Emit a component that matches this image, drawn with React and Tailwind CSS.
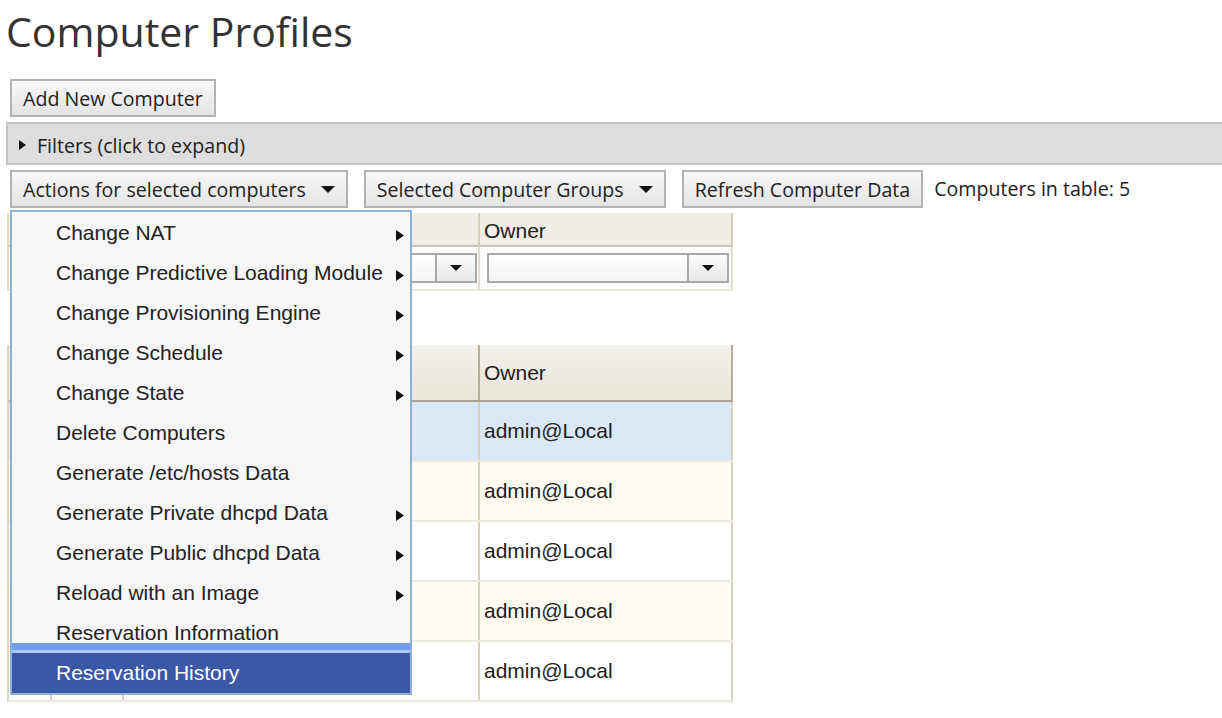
import React from "react";

const menuItems = [
  { label: "Change NAT", sub: true },
  { label: "Change Predictive Loading Module", sub: true },
  { label: "Change Provisioning Engine", sub: true },
  { label: "Change Schedule", sub: true },
  { label: "Change State", sub: true },
  { label: "Delete Computers" },
  { label: "Generate /etc/hosts Data" },
  { label: "Generate Private dhcpd Data", sub: true },
  { label: "Generate Public dhcpd Data", sub: true },
  { label: "Reload with an Image", sub: true },
  { label: "Reservation Information" },
  { label: "Reservation History", active: true },
];

const rowColors = ["bg-[#dbe7f6]", "bg-[#fdfbf2]", "bg-white", "bg-[#fdfbf2]", "bg-white"];

const DownArrow = ({ w = 14, h = 7 }) => (
  <svg width={w} height={h} viewBox={`0 0 ${w} ${h}`}>
    <path d={`M0 0H${w}L${w / 2} ${h}Z`} fill="#111" />
  </svg>
);

const RightArrow = ({ w = 8, h = 11 }) => (
  <svg width={w} height={h} viewBox={`0 0 ${w} ${h}`}>
    <path d={`M0 0L${w} ${h / 2}L0 ${h}Z`} fill="#111" />
  </svg>
);

function Button({ children, arrow }) {
  return (
    <button className="flex h-[38px] items-center gap-[15px] border-2 border-[#b3b3b3] bg-linear-to-b from-[#f8f8f8] to-[#e4e4e4] px-[11px] text-[19.6px] leading-[24px] text-[#222]">
      <span className="pt-[1px]">{children}</span>
      {arrow && <DownArrow />}
    </button>
  );
}

function Select({ className }) {
  return (
    <div className={`flex h-[30px] border-2 border-[#a9a9a9] bg-linear-to-b from-white to-[#f4f4f4] ${className}`}>
      <div className="flex-1" />
      <div className="flex w-[40px] items-center justify-center border-l-2 border-[#a9a9a9] bg-linear-to-b from-[#fbfbfb] to-[#e8e8e8]">
        <DownArrow w={12} h={6} />
      </div>
    </div>
  );
}

export default function App() {
  return (
    <div className="min-h-[718px] bg-white pl-[6px] font-['Open_Sans',sans-serif] text-[#222]">
      <h1 className="pt-[7px] text-[41px] leading-[48px] text-[#333]">Computer Profiles</h1>

      <div className="mt-[24px] ml-[4px] flex">
        <Button>Add New Computer</Button>
      </div>

      {/* filters bar */}
      <div className="mt-[5px] flex h-[43px] items-center gap-[11px] border-y-2 border-l-2 border-[#c4c4c4] bg-[#dedede] pl-[11px] text-[19.6px]">
        <span className="pt-[3px]">
          <RightArrow w={7} h={10} />
        </span>
        <span className="pt-[4px]">Filters (click to expand)</span>
      </div>

      {/* action buttons */}
      <div className="relative z-10 mt-[5px] ml-[4px] flex items-center gap-[16px]">
        <Button arrow>Actions for selected computers</Button>
        <Button arrow>Selected Computer Groups</Button>
        <Button>Refresh Computer Data</Button>
        <span className="-ml-[5px] text-[19.6px]">Computers in table: 5</span>

        <div className="absolute left-0 top-[40px] w-[402px] border-2 border-[#8fb1d9] bg-[#f6f6f6] pt-[1px] font-['Liberation_Sans',Arial,sans-serif] text-[21px]">
          {menuItems.map((item) => (
            <div
              key={item.label}
              className={
                item.active
                  ? "relative flex h-[40px] items-center justify-between bg-[#3b58a6] pl-[44px] pr-[6px] text-white shadow-[0_-3px_0_#afc7f3,0_-10px_0_#739eec]"
                  : "flex h-[40px] items-center justify-between pl-[44px] pr-[6px] text-[#222]"
              }
            >
              <span>{item.label}</span>
              {item.sub && (
                <span className="pt-[5px]">
                  <RightArrow />
                </span>
              )}
            </div>
          ))}
        </div>
      </div>

      {/* filter table */}
      <div className="mt-[5px] ml-[1px] w-[726px] border-l-2 border-[#e0dac8] font-['Liberation_Sans',Arial,sans-serif] text-[21px] text-[#222]">
        <div className="grid h-[34px] grid-cols-[43px_72px_356px_253px] border-b-2 border-[#c9c4b6] bg-[#efede6]">
          <div className="border-r-2 border-[#d3cdbb]" />
          <div className="border-r-2 border-[#d3cdbb]" />
          <div className="border-r-2 border-[#d3cdbb]" />
          <div className="flex items-center border-r-2 border-[#d3cdbb] pl-[4px] pt-[2px]">Owner</div>
        </div>
        <div className="grid h-[44px] grid-cols-[43px_72px_356px_253px] border-b-2 border-[#ece8dc] bg-white">
          <div className="border-r-2 border-[#e2ddcc]" />
          <div className="border-r-2 border-[#e2ddcc]" />
          <div className="flex items-center border-r-2 border-[#e2ddcc] pl-[6px] pr-[1px]">
            <Select className="w-full" />
          </div>
          <div className="flex items-center border-r-2 border-[#e2ddcc] pl-[7px] pr-[2px]">
            <Select className="w-full" />
          </div>
        </div>
      </div>

      {/* computers table */}
      <div className="mt-[54px] ml-[1px] w-[726px] border-l-2 border-[#ddd6c2] font-['Liberation_Sans',Arial,sans-serif] text-[21px] text-[#222]">
        <div className="grid h-[57px] grid-cols-[43px_72px_356px_253px] border-b-2 border-[#aaa392] bg-linear-to-b from-[#f4f2ed] to-[#e8e4d9]">
          <div className="border-r-2 border-[#b3ad9c]" />
          <div className="border-r-2 border-[#b3ad9c]" />
          <div className="border-r-2 border-[#b3ad9c]" />
          <div className="flex items-center border-r-2 border-[#b3ad9c] pl-[4px] pt-[1px]">Owner</div>
        </div>
        {rowColors.map((bg, i) => (
          <div
            key={i}
            className={`grid h-[60px] grid-cols-[43px_72px_356px_253px] border-b-2 border-[#ebe8de] ${bg}`}
          >
            <div className="border-r-2 border-[#d8d1bb]" />
            <div className="border-r-2 border-[#d8d1bb]" />
            <div className="border-r-2 border-[#d8d1bb]" />
            <div className="flex items-center border-r-2 border-[#d8d1bb] pl-[4px]">admin@Local</div>
          </div>
        ))}
      </div>
    </div>
  );
}
